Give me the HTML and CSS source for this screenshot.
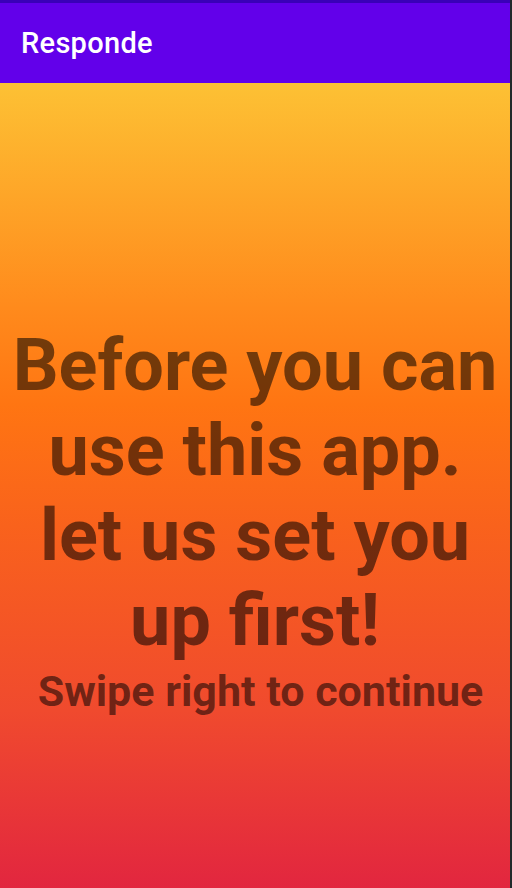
FILE: index.html
```html
<!DOCTYPE html>
<html>
<head>
<meta charset="utf-8">
<link rel="stylesheet" href="styles.css">
</head>
<body>
<div class="screen">
  <div class="app">
    <div class="status"></div>
    <header class="appbar"><span class="title">Responde</span></header>
    <main class="content">
      <h1 class="headline">Before you can use this app. let us set you up first!</h1>
      <p class="hint">Swipe right to continue</p>
    </main>
  </div>
  <div class="edge"></div>
</div>
</body>
</html>
```
FILE: styles.css
```css
html, body {
  margin: 0;
  padding: 0;
  height: 100%;
}
body {
  font-family: Roboto, "Noto Sans", sans-serif;
}
.screen {
  display: flex;
  height: 888px;
  width: 512px;
}
.app {
  flex: 1;
  display: flex;
  flex-direction: column;
}
.edge {
  width: 2px;
  background: #222a2a;
}
.status {
  height: 3px;
  background: #3a00b8;
}
.appbar {
  height: 80px;
  background: #6200ea;
  display: flex;
  align-items: center;
  padding-left: 21px;
}
.title {
  color: #ffffff;
  font-size: 29px;
  font-weight: 500;
  letter-spacing: 0.3px;
}
.content {
  flex: 1;
  background: linear-gradient(to bottom, #fdc134 0%, #ff8a1c 28%, #ff7512 40%, #f9621c 55%, #f04a2e 78%, #e2263f 100%);
  padding-top: 240px;
  text-align: center;
}
.headline {
  margin: 0;
  font-size: 72px;
  font-weight: 700;
  line-height: 85px;
  color: rgba(0, 0, 0, 0.55);
  padding: 0 4px;
}
.hint {
  margin: 3px 0 0 11px;
  font-size: 43px;
  font-weight: 700;
  line-height: 50px;
  color: rgba(0, 0, 0, 0.55);
}
```
